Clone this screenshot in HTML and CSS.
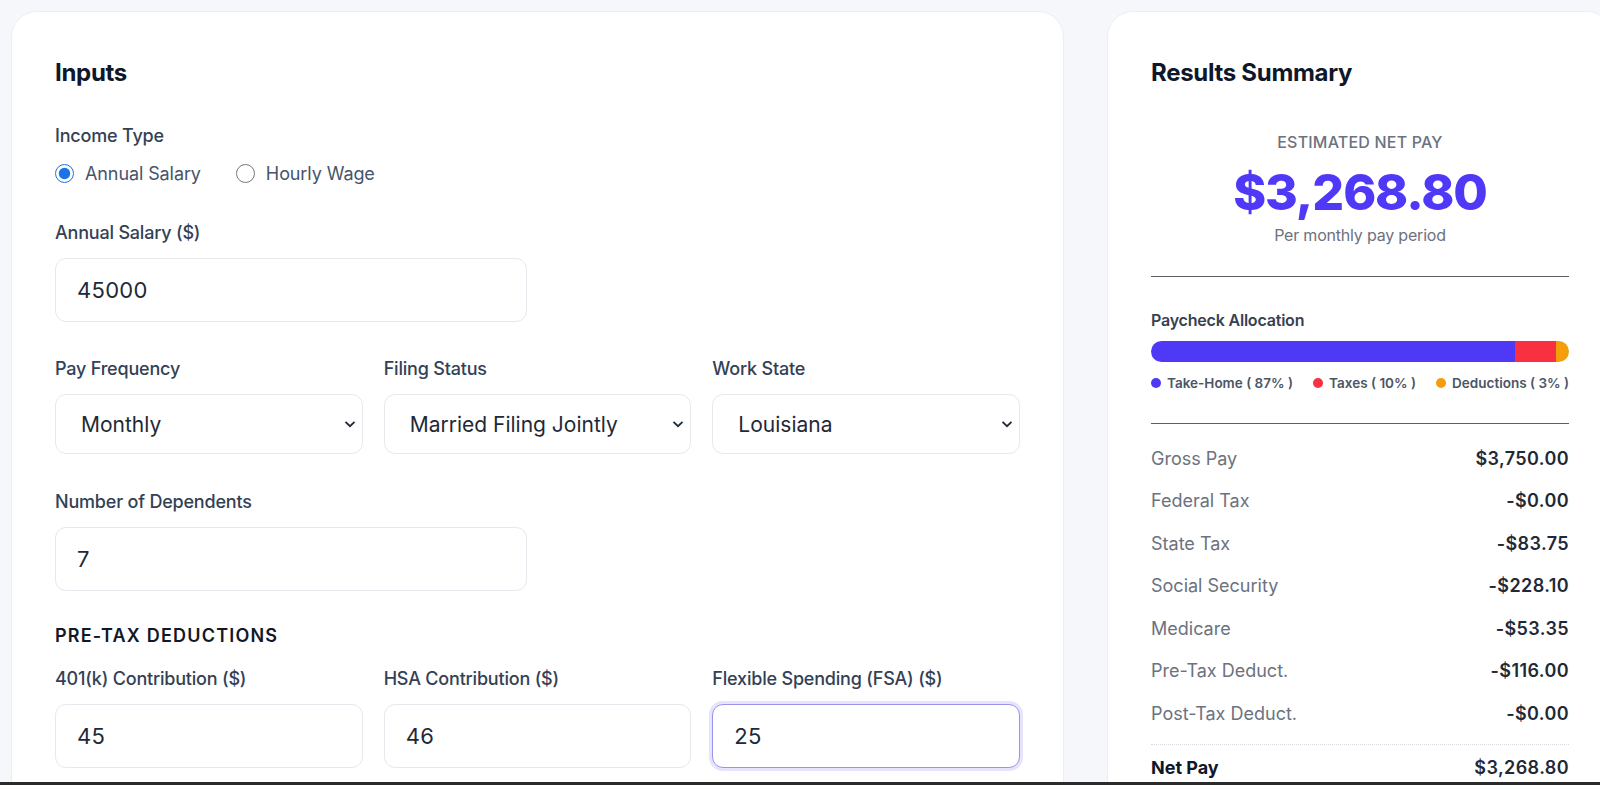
FILE: index.html
```html
<html>
<head>
<meta charset="utf-8">
<link rel="stylesheet" href="styles.css">
</head>

<body>

<div class="page">

<section class="card inputs">
  <h2 class="card-title">Inputs</h2>

  <div class="form">
    <div class="field">
      <span class="label">Income Type</span>
      <div class="radios">
        <label class="radio"><input type="radio" name="income" checked> Annual Salary</label>
        <label class="radio"><input type="radio" name="income"> Hourly Wage</label>
      </div>
    </div>

    <div class="row-2">
      <div class="field">
        <label class="label">Annual Salary ($)</label>
        <input class="control" type="text" value="45000">
      </div>
    </div>

    <div class="row-3">
      <div class="field">
        <label class="label">Pay Frequency</label>
        <div class="select-wrap">
          <select class="control select">
            <option>Monthly</option>
          </select>
          <svg class="chevron" viewBox="0 0 12 8"><path d="M1.5 1.8 6 6.2l4.5-4.4"/></svg>
        </div>
      </div>
      <div class="field">
        <label class="label">Filing Status</label>
        <div class="select-wrap">
          <select class="control select">
            <option>Married Filing Jointly</option>
          </select>
          <svg class="chevron" viewBox="0 0 12 8"><path d="M1.5 1.8 6 6.2l4.5-4.4"/></svg>
        </div>
      </div>
      <div class="field">
        <label class="label">Work State</label>
        <div class="select-wrap">
          <select class="control select">
            <option>Louisiana</option>
          </select>
          <svg class="chevron" viewBox="0 0 12 8"><path d="M1.5 1.8 6 6.2l4.5-4.4"/></svg>
        </div>
      </div>
    </div>

    <div class="row-2">
      <div class="field">
        <label class="label">Number of Dependents</label>
        <input class="control" type="text" value="7">
      </div>
    </div>

    <div class="section">
      <h3 class="section-title">PRE-TAX DEDUCTIONS</h3>
      <div class="row-3">
        <div class="field">
          <label class="label">401(k) Contribution ($)</label>
          <input class="control" type="text" value="45">
        </div>
        <div class="field">
          <label class="label">HSA Contribution ($)</label>
          <input class="control" type="text" value="46">
        </div>
        <div class="field">
          <label class="label">Flexible Spending (FSA) ($)</label>
          <input class="control focused" type="text" value="25">
        </div>
      </div>
    </div>
  </div>
</section>

<section class="card results">
  <h2 class="card-title">Results Summary</h2>

  <div class="net">
    <div class="net-label">ESTIMATED NET PAY</div>
    <div class="net-value">$3,268.80</div>
    <div class="net-sub">Per monthly pay period</div>
  </div>

  <hr class="divider">

  <div class="alloc">
    <div class="alloc-title">Paycheck Allocation</div>
    <div class="bar">
      <span class="seg take" style="width:87%"></span>
      <span class="seg tax" style="width:9.8%"></span>
      <span class="seg ded" style="width:3.2%"></span>
    </div>
    <div class="legend">
      <span class="key"><i class="dot take"></i>Take-Home ( 87% )</span>
      <span class="key"><i class="dot tax"></i>Taxes ( 10% )</span>
      <span class="key"><i class="dot ded"></i>Deductions ( 3% )</span>
    </div>
  </div>

  <hr class="divider">

  <div class="lines">
    <div class="line"><span>Gross Pay</span><b>$3,750.00</b></div>
    <div class="line"><span>Federal Tax</span><b>-$0.00</b></div>
    <div class="line"><span>State Tax</span><b>-$83.75</b></div>
    <div class="line"><span>Social Security</span><b>-$228.10</b></div>
    <div class="line"><span>Medicare</span><b>-$53.35</b></div>
    <div class="line"><span>Pre-Tax Deduct.</span><b>-$116.00</b></div>
    <div class="line"><span>Post-Tax Deduct.</span><b>-$0.00</b></div>
    <div class="line total"><span>Net Pay</span><b>$3,268.80</b></div>
  </div>
</section>

</div>

<div class="screen-edge"></div>

</body>
</html>
```

FILE: styles.css
```css
body        { margin:0; background:#f6f7fb; font-family:Inter, "Open Sans", sans-serif;
              color:#1f2937; overflow:hidden }
.page       { display:grid; grid-template-columns:1053px 506px; column-gap:43px;
              padding:11px 0 0 11px; align-items:start }

.card       { background:#fff; border:1px solid #eceef3; border-radius:26px;
              padding:46px 43px 60px 43px; box-sizing:border-box; min-height:900px }
.card-title { margin:0; font-size:24px; line-height:30px; font-weight:700;
              color:#0f172a; letter-spacing:-0.3px }

/* inputs column */
.inputs .card-title { margin-bottom:36px }
.form       { display:flex; flex-direction:column; gap:35.5px }
.field      { display:flex; flex-direction:column; gap:13px; min-width:0 }
.label      { font-size:18px; line-height:24px; font-weight:500; color:#334155;
              letter-spacing:-0.2px }
.row-2      { display:grid; grid-template-columns:1fr 1fr; column-gap:21px }
.row-3      { display:grid; grid-template-columns:1fr 1fr 1fr; column-gap:21px }

.radios     { display:flex; gap:35px; height:24px; align-items:center }
.radio      { display:flex; align-items:center; gap:11px; font-size:18px;
              color:#475569; letter-spacing:-0.1px }
.radio input { width:19px; height:19px; margin:0; accent-color:#1a73e8 }

.control    { height:64px; box-sizing:border-box; border:1px solid #e6e8ee; border-radius:11px;
              background:#fff; padding:0 21px; font-family:inherit; font-size:22px;
              color:#1f2937; outline:none; width:100%; letter-spacing:0.3px }
.control.focused { border-color:#9a94ec; box-shadow:0 0 0 3px #e6e4fd }

.select-wrap { position:relative }
.select     { height:60px; appearance:none; -webkit-appearance:none; padding-left:25px;
              font-size:21px; letter-spacing:0 }
.chevron    { position:absolute; right:7px; top:26px; width:12px; height:8px;
              fill:none; stroke:#1f2937; stroke-width:1.8; pointer-events:none }

.section    { display:flex; flex-direction:column; gap:21px }
.section-title { margin:0; font-size:18px; line-height:20px; font-weight:600;
                 letter-spacing:1.2px; color:#111827 }

/* results column */
.net        { text-align:center; margin-top:43.5px }
.net-label  { font-size:16px; line-height:20px; font-weight:500; color:#6b7280;
              letter-spacing:0.2px }
.net-value  { margin-top:10px; font-size:50px; line-height:60px; font-weight:800;
              color:#4f39f6; letter-spacing:-1.1px }
.net-sub    { margin-top:3px; font-size:16px; line-height:20px; color:#6b7280;
              letter-spacing:-0.2px }

.divider    { border:0; border-top:1px solid #5b5f66; margin:31.5px 0 0 0 }

.alloc      { margin-top:31.5px }
.alloc-title { font-size:16px; line-height:22px; font-weight:600; color:#374151;
               letter-spacing:-0.2px }
.bar        { display:flex; height:21px; border-radius:11px; overflow:hidden; margin-top:10px }
.seg.take   { background:#4f39f6 }
.seg.tax    { background:#f9303f }
.seg.ded    { background:#f59e0b }
.legend     { display:flex; justify-content:space-between; margin-top:12px;
              font-size:13.5px; line-height:18px; font-weight:600; color:#4b5563 }
.key        { display:flex; align-items:center; gap:6px }
.dot        { width:10px; height:10px; border-radius:50% }
.dot.take   { background:#4f39f6 }
.dot.tax    { background:#f9303f }
.dot.ded    { background:#f59e0b }

.lines      { margin-top:13.5px }
.line       { display:flex; justify-content:space-between; padding:9.25px 0;
              font-size:18px; line-height:24px }
.line span  { color:#6b7280 }
.line b     { font-weight:600; color:#1f2937; letter-spacing:0.4px }
.line.total { margin-top:8.75px; border-top:1px dotted #d6d9df; padding-top:11px }
.line.total span { color:#0f172a; font-weight:700 }
.line.total b    { color:#1f2937 }

.screen-edge { position:fixed; left:0; right:0; bottom:0; height:3px; background:#2b2b2b }
```
